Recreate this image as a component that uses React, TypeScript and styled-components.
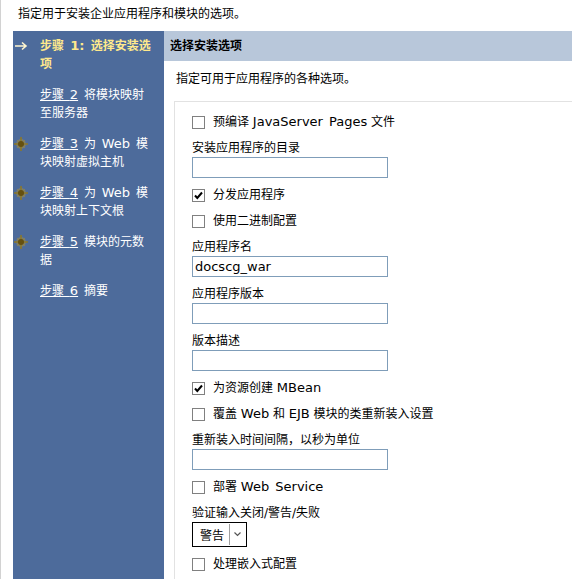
import styled, { createGlobalStyle } from 'styled-components';

const GlobalStyle = createGlobalStyle`
  html, body {
    margin: 0;
    padding: 0;
    background: #ffffff;
  }
  body {
    font-family: 'DejaVu Sans', 'Noto Sans CJK SC', sans-serif;
    font-size: 12px;
    color: #000000;
  }
`;

interface IStep {
  num: number;
  text: string[];
  icon?: 'arrow' | 'star';
  current?: boolean;
}

const steps: IStep[] = [
  { num: 1, text: ['选择安装选', '项'], icon: 'arrow', current: true },
  { num: 2, text: ['将模块映射', '至服务器'] },
  { num: 3, text: ['为 Web 模', '块映射虚拟主机'], icon: 'star' },
  { num: 4, text: ['为 Web 模', '块映射上下文根'], icon: 'star' },
  { num: 5, text: ['模块的元数', '据'], icon: 'star' },
  { num: 6, text: ['摘要'] },
];

// latin runs are set a touch larger than the CJK glyphs, like the original page
function Mixed({ text }: { text: string }) {
  const parts = text.split(/([A-Za-z0-9_:]+(?: [A-Za-z0-9_:]+)*)/);
  return (
    <>
      {parts.map((p, i) => (i % 2 === 1 ? <Latin key={i}>{p}</Latin> : p))}
    </>
  );
}

function Arrow() {
  return (
    <svg width="14" height="10" viewBox="0 0 14 10">
      <path d="M1 5 H12 M8 1.5 L12 5 L8 8.5" stroke="#fff6cf" strokeWidth="1.6" fill="none" />
    </svg>
  );
}

function Star() {
  return (
    <svg width="14" height="14" viewBox="0 0 14 14">
      <circle cx="7" cy="7" r="5" fill="#9c8a48" opacity="0.55" />
      <path d="M7 0 V14 M0 7 H14" stroke="#8c7828" strokeWidth="1.6" />
      <path d="M3.2 3.2 L10.8 10.8 M10.8 3.2 L3.2 10.8" stroke="#9c8a40" strokeWidth="1" opacity="0.7" />
      <circle cx="7" cy="7" r="3" fill="#65500f" />
    </svg>
  );
}

function CheckRow({ label, checked }: { label: string; checked?: boolean }) {
  return (
    <Row>
      <Box>
        {checked && (
          <svg width="11" height="11" viewBox="0 0 11 11">
            <path d="M2 5.5 L4.3 8 L9 2.5" stroke="#000" strokeWidth="2" fill="none" />
          </svg>
        )}
      </Box>
      <span>
        <Mixed text={label} />
      </span>
    </Row>
  );
}

function TextField({ label, value }: { label: string; value?: string }) {
  return (
    <Field>
      <FieldLabel>{label}</FieldLabel>
      <Input>{value}</Input>
    </Field>
  );
}

export default function App() {
  return (
    <>
      <GlobalStyle />
      <Page>
        <Intro>指定用于安装企业应用程序和模块的选项。</Intro>
        <Layout>
          <Sidebar>
            {steps.map((s) => (
              <StepItem key={s.num} $current={s.current}>
                <IconSlot>
                  {s.icon === 'arrow' && <Arrow />}
                  {s.icon === 'star' && <Star />}
                </IconSlot>
                <StepText>
                  {s.current ? (
                    <>
                      步骤 <Latin>1:</Latin> {s.text[0]}
                    </>
                  ) : (
                    <>
                      <StepLink>
                        步骤 <Latin>{s.num}</Latin>
                      </StepLink>{' '}
                      <Mixed text={s.text[0]} />
                    </>
                  )}
                  {s.text[1] && (
                    <>
                      <br />
                      {s.text[1]}
                    </>
                  )}
                </StepText>
              </StepItem>
            ))}
          </Sidebar>
          <Main>
            <Band>选择安装选项</Band>
            <Desc>指定可用于应用程序的各种选项。</Desc>
            <OptionsBox>
              <CheckRow label="预编译 JavaServer Pages 文件" />
              <TextField label="安装应用程序的目录" />
              <CheckRow label="分发应用程序" checked />
              <CheckRow label="使用二进制配置" />
              <TextField label="应用程序名" value="docscg_war" />
              <TextField label="应用程序版本" />
              <TextField label="版本描述" />
              <CheckRow label="为资源创建 MBean" checked />
              <CheckRow label="覆盖 Web 和 EJB 模块的类重新装入设置" />
              <TextField label="重新装入时间间隔，以秒为单位" />
              <CheckRow label="部署 Web Service" />
              <Field>
                <FieldLabel>验证输入关闭/警告/失败</FieldLabel>
                <Select>
                  <SelectValue>警告</SelectValue>
                  <SelectButton>
                    <svg width="7" height="5" viewBox="0 0 7 5">
                      <path d="M0.5 0.5 L3.5 3.5 L6.5 0.5" stroke="#555" strokeWidth="1.2" fill="none" />
                    </svg>
                  </SelectButton>
                </Select>
              </Field>
              <CheckRow label="处理嵌入式配置" />
            </OptionsBox>
          </Main>
        </Layout>
      </Page>
    </>
  );
}

const Page = styled.div`
  min-height: 579px;
  border-left: 1px solid #d2d2d2;
  display: flex;
  flex-direction: column;
  overflow: hidden;
`;

const Intro = styled.div`
  height: 31px;
  padding-left: 17px;
  line-height: 28px;
`;

const Layout = styled.div`
  flex: 1;
  display: flex;
`;

const Latin = styled.span`
  font-size: 13px;
  word-spacing: 2px;
`;

const Sidebar = styled.div`
  margin-left: 12px;
  width: 151px;
  flex-shrink: 0;
  background: #4d6b9b;
  padding-top: 6px;
  display: flex;
  flex-direction: column;
  gap: 13px;
`;

const StepItem = styled.div<{ $current?: boolean }>`
  display: flex;
  color: ${(p) => (p.$current ? '#ffe98c' : '#ffffff')};
  font-weight: ${(p) => (p.$current ? 'bold' : 'normal')};
  line-height: 18px;
`;

const IconSlot = styled.div`
  width: 26px;
  padding-left: 1px;
  flex-shrink: 0;
  display: flex;
  justify-content: flex-start;
  align-items: center;
  height: 16px;
  padding-top: 1px;
`;

const StepText = styled.div`
  white-space: nowrap;
  word-spacing: 2px;
`;

const StepLink = styled.span`
  text-decoration: underline;
`;

const Main = styled.div`
  flex: 1;
  display: flex;
  flex-direction: column;
`;

const Band = styled.div`
  height: 30px;
  background: #b8c7da;
  font-weight: bold;
  line-height: 30px;
  padding-left: 6px;
`;

const Desc = styled.div`
  padding: 9px 0 0 12px;
  height: 31px;
  line-height: 18px;
`;

const OptionsBox = styled.div`
  margin-left: 10px;
  border-top: 1px solid #e2e2e2;
  border-left: 1px solid #e2e2e2;
  padding: 11px 0 12px 17px;
  display: flex;
  flex-direction: column;
  gap: 8px;
`;

const Row = styled.label`
  display: flex;
  align-items: center;
  gap: 8px;
  line-height: 18px;
  height: 18px;
  white-space: nowrap;
`;

const Box = styled.span`
  width: 11px;
  height: 11px;
  flex-shrink: 0;
  border: 1px solid #808080;
  background: #ffffff;
  display: flex;
  align-items: center;
  justify-content: center;
`;

const Field = styled.div`
  display: flex;
  flex-direction: column;
`;

const FieldLabel = styled.div`
  line-height: 18px;
  height: 18px;
`;

const Input = styled.div`
  width: 192px;
  height: 19px;
  border: 1px solid #7f9db9;
  font-size: 13px;
  line-height: 19px;
  padding-left: 2px;
`;

const Select = styled.div`
  width: 53px;
  height: 23px;
  border: 1px solid #000000;
  display: flex;
  align-items: stretch;
`;

const SelectValue = styled.div`
  flex: 1;
  display: flex;
  align-items: center;
  padding-left: 7px;
`;

const SelectButton = styled.div`
  width: 15px;
  margin: 1px 1px 1px 0;
  border-left: 1px solid #a0a0a0;
  display: flex;
  align-items: center;
  justify-content: center;
`;
